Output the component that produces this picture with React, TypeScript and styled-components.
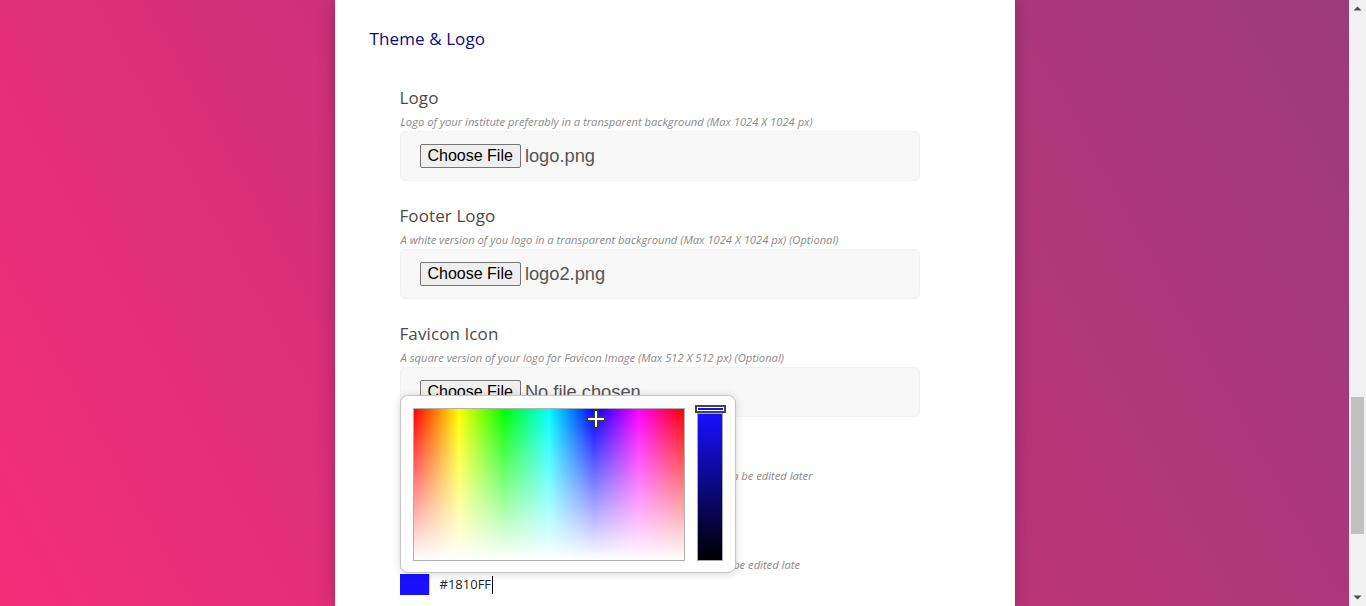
import React from "react";
import styled, { createGlobalStyle } from "styled-components";

const GlobalStyle = createGlobalStyle`
  html, body {
    margin: 0;
    height: 100%;
    overflow: hidden;
  }
  body {
    font-family: "Open Sans", "Noto Sans", Arial, sans-serif;
  }
  #root { height: 100%; }
  * { box-sizing: border-box; }
`;

const Shell = styled.div`
  display: flex;
  height: 100vh;
`;

const Viewport = styled.div`
  flex: 1;
  height: 100%;
  overflow: hidden;
  background: linear-gradient(61deg, #f52d79 0%, #c83278 45%, #9b3a7b 100%);
`;

const ScrollBar = styled.div`
  width: 17px;
  height: 100%;
  display: flex;
  flex-direction: column;
  background: #f1f1f1;
`;

const ScrollArrow = styled.div`
  height: 17px;
  display: flex;
  align-items: center;
  justify-content: center;
`;

const ScrollTrack = styled.div`
  position: relative;
  flex: 1;
`;

const ScrollThumb = styled.div<{ $offset: number; $size: number }>`
  position: absolute;
  left: 2px;
  right: 2px;
  top: ${(p) => p.$offset * 100}%;
  height: ${(p) => p.$size * 100}%;
  background: #c1c1c1;
`;

const Card = styled.main`
  width: 680px;
  min-height: 100%;
  margin: 0 auto;
  background: #ffffff;
  box-shadow: 0 0 16px rgba(40, 0, 20, 0.28);
  padding: 27px 35px 0;
`;

const GroupTitle = styled.h2`
  margin: 0 0 35px;
  font-size: 17px;
  line-height: 24px;
  font-weight: 400;
  color: #0a0a80;
  letter-spacing: 0.1px;
`;

const Fields = styled.div`
  margin-left: 30px;
  width: 520px;
  display: flex;
  flex-direction: column;
  gap: 23px;
`;

const Field = styled.div`
  position: relative;
  display: flex;
  flex-direction: column;
`;

const Label = styled.label`
  font-size: 17px;
  line-height: 24px;
  color: #4a4a4a;
  letter-spacing: 0.1px;
`;

const Hint = styled.div`
  margin-top: 4px;
  margin-bottom: 1px;
  padding-left: 1px;
  font-size: 11.2px;
  line-height: 16px;
  font-style: italic;
  color: #8a8a8a;
  white-space: nowrap;
`;

const Box = styled.div`
  height: 50px;
  display: flex;
  align-items: center;
  gap: 4px;
  padding: 0 19px;
  background: #f8f8f8;
  border: 1px solid #f2f2f2;
  border-radius: 5px;
  font-family: "Liberation Sans", Arial, sans-serif;
  font-size: 18.3px;
  color: #555;
`;

const FileButton = styled.span`
  display: inline-flex;
  align-items: center;
  height: 24px;
  padding: 0 7px;
  background: #efefef;
  border: 1px solid #767676;
  border-radius: 2px;
  color: #000;
  font-family: "Liberation Sans", Arial, sans-serif;
  font-size: 16px;
`;

const FileName = styled.span`
  color: #555;
`;

const ColorRow = styled.div`
  height: 21px;
  display: flex;
  align-items: center;
`;

const Swatch = styled.span<{ $color: string }>`
  width: 30px;
  height: 21px;
  background: ${(p) => p.$color};
  border-right: 1px solid #c9c9e8;
`;

const ColorValue = styled.span`
  margin-left: 10px;
  font-size: 13px;
  line-height: 21px;
  color: #222;
`;

const Caret = styled.span`
  margin-left: 1px;
  width: 1px;
  height: 18px;
  background: #000;
`;

const Picker = styled.div`
  position: absolute;
  left: 0;
  bottom: 22px;
  width: 336px;
  height: 178px;
  padding: 12px;
  display: flex;
  gap: 12px;
  background: #fff;
  border: 1px solid #c4c4c4;
  border-radius: 8px;
  box-shadow: 0 1px 8px rgba(0, 0, 0, 0.16);
  z-index: 5;
`;

const Pad = styled.div`
  position: relative;
  width: 273px;
  height: 153px;
  border: 1px solid #b0b0b0;
  background:
    linear-gradient(to bottom, rgba(255, 255, 255, 0) 0%, #ffffff 100%),
    linear-gradient(
      to right,
      #ff0000 0%,
      #ffff00 16.66%,
      #00ff00 33.33%,
      #00ffff 50%,
      #0000ff 66.66%,
      #ff00ff 83.33%,
      #ff0000 100%
    );
`;

const Cross = styled.svg`
  position: absolute;
  left: 172px;
  top: 0px;
`;

const SliderColumn = styled.div`
  position: relative;
  width: 26px;
  height: 153px;
  padding-top: 5px;
`;

const SliderTrack = styled.div`
  height: 100%;
  border: 1px solid #a8a8a8;
  background: linear-gradient(to bottom, #1810ff 0%, #000000 100%);
`;

const SliderHandle = styled.div`
  position: absolute;
  left: -2px;
  top: -3px;
  width: 31px;
  height: 8px;
  border: 2px solid #474747;
  background: #1810ff;
  box-shadow: inset 0 0 0 1px #ffffff;
`;

const fileFields = [
  {
    label: "Logo",
    hint: "Logo of your institute preferably in a transparent background (Max 1024 X 1024 px)",
    file: "logo.png",
  },
  {
    label: "Footer Logo",
    hint: "A white version of you logo in a transparent background (Max 1024 X 1024 px) (Optional)",
    file: "logo2.png",
  },
  {
    label: "Favicon Icon",
    hint: "A square version of your logo for Favicon Image (Max 512 X 512 px) (Optional)",
    file: "No file chosen",
  },
];

function ColorPicker() {
  return (
    <Picker>
      <Pad>
        <Cross width="20" height="20" viewBox="0 0 20 20">
          <rect x="7.5" y="0.5" width="5" height="19" fill="#3c3c3c" />
          <rect x="0.5" y="7.5" width="19" height="5" fill="#3c3c3c" />
          <rect x="9" y="2" width="2" height="16" fill="#ffffff" />
          <rect x="2" y="9" width="16" height="2" fill="#ffffff" />
        </Cross>
      </Pad>
      <SliderColumn>
        <SliderTrack />
        <SliderHandle />
      </SliderColumn>
    </Picker>
  );
}

function Arrow({ down }: { down?: boolean }) {
  return (
    <ScrollArrow>
      <svg width="9" height="5" viewBox="0 0 9 5">
        <polygon
          points={down ? "0.5,0.5 8.5,0.5 4.5,4.5" : "0.5,4.5 8.5,4.5 4.5,0.5"}
          fill="#505050"
        />
      </svg>
    </ScrollArrow>
  );
}

export default function App() {
  return (
    <>
      <GlobalStyle />
      <Shell>
        <Viewport>
          <Card>
            <GroupTitle>Theme &amp; Logo</GroupTitle>
            <Fields>
              {fileFields.map((f) => (
                <Field key={f.label}>
                  <Label>{f.label}</Label>
                  <Hint>{f.hint}</Hint>
                  <Box>
                    <FileButton>Choose File</FileButton>
                    <FileName>{f.file}</FileName>
                  </Box>
                </Field>
              ))}
              <Field>
                <Label>Primary Color</Label>
                <Hint>
                  Primary colour for your institute website and student portal, this can be edited later
                </Hint>
                <ColorRow>
                  <Swatch $color="#0a0a80" />
                  <ColorValue>#0A0A80</ColorValue>
                </ColorRow>
              </Field>
              <Field>
                <Label>Secondary Color</Label>
                <Hint>
                  Second colour of your institute website and student portal, this can be edited late
                </Hint>
                <ColorRow>
                  <Swatch $color="#1810ff" />
                  <ColorValue>#1810FF</ColorValue>
                  <Caret />
                </ColorRow>
                <ColorPicker />
              </Field>
            </Fields>
          </Card>
        </Viewport>
        <ScrollBar>
          <Arrow />
          <ScrollTrack>
            <ScrollThumb $offset={0.664} $size={0.2395} />
          </ScrollTrack>
          <Arrow down />
        </ScrollBar>
      </Shell>
    </>
  );
}
